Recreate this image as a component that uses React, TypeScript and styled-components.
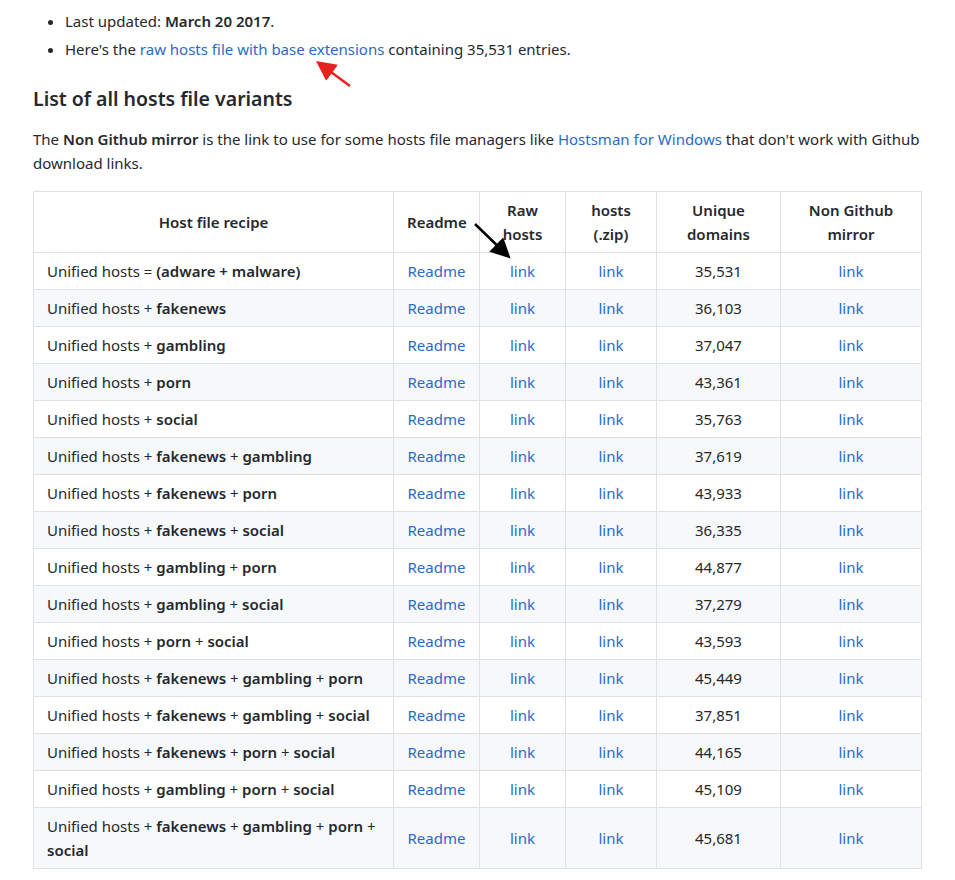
import React from "react";
import styled, { createGlobalStyle } from "styled-components";

const Global = createGlobalStyle`
  body { margin: 0; background: #fff; font-family: "Noto Sans", "Open Sans", sans-serif; color: #24292e; font-size: 15px; line-height: 24px; }
`;
const Page = styled.div` position: relative; padding: 9px 35px 0 33px; width: 887px; `;
const List = styled.ul` margin: 0; padding-left: 32px; li { margin-bottom: 4px; } `;
const A = styled.a` color: #2a6ac8; text-decoration: none; `;
const H2 = styled.h2` font-size: 19.5px; font-weight: 600; margin: 24px 0 14px; line-height: 28px; `;
const P = styled.p` margin: 0 0 16px; `;
const Table = styled.table` border-collapse: collapse; width: 888px; table-layout: fixed; `;
const Th = styled.th` border: 1px solid #dfe2e5; padding: 6px 13px; font-weight: 600; text-align: center; height: 47px; `;
const Tr = styled.tr<{ $alt: boolean }>` background: ${p => (p.$alt ? "#f6f8fa" : "#fff")}; `;
const Td = styled.td<{ $left?: boolean }>` border: 1px solid #dfe2e5; padding: 6px 13px; text-align: ${p => (p.$left ? "left" : "center")}; `;
const B = styled.b` font-weight: 600; `;
const Arrow = styled.svg` position: absolute; overflow: visible; left: 0; top: 0; pointer-events: none; `;

const rows: [string[], string][] = [
  [["= (adware + malware)"], "35,531"],
  [["fakenews"], "36,103"], [["gambling"], "37,047"], [["porn"], "43,361"], [["social"], "35,763"],
  [["fakenews", "gambling"], "37,619"], [["fakenews", "porn"], "43,933"], [["fakenews", "social"], "36,335"],
  [["gambling", "porn"], "44,877"], [["gambling", "social"], "37,279"], [["porn", "social"], "43,593"],
  [["fakenews", "gambling", "porn"], "45,449"], [["fakenews", "gambling", "social"], "37,851"],
  [["fakenews", "porn", "social"], "44,165"], [["gambling", "porn", "social"], "45,109"],
  [["fakenews", "gambling", "porn", "social"], "45,681"],
];

function Recipe({ parts }: { parts: string[] }) {
  if (parts[0].startsWith("=")) return <>Unified hosts = <B>(adware + malware)</B></>;
  return <>Unified hosts{parts.map((p, i) => <React.Fragment key={i}> + <B>{p}</B></React.Fragment>)}</>;
}

export default function App() {
  return (
    <Page>
      <Global />
      <List>
        <li>Last updated: <B>March 20 2017</B>.</li>
        <li>Here's the <A href="#">raw hosts file with base extensions</A> containing 35,531 entries.</li>
      </List>
      <H2>List of all hosts file variants</H2>
      <P>The <B>Non Github mirror</B> is the link to use for some hosts file managers like <A href="#">Hostsman for Windows</A> that don't work with Github download links.</P>
      <Table>
        <colgroup>
          <col style={{ width: 360 }} /><col style={{ width: 86 }} /><col style={{ width: 86 }} />
          <col style={{ width: 91 }} /><col style={{ width: 124 }} /><col style={{ width: 141 }} />
        </colgroup>
        <thead>
          <tr>
            <Th>Host file recipe</Th><Th>Readme</Th><Th>Raw hosts</Th><Th>hosts (.zip)</Th><Th>Unique domains</Th><Th>Non Github mirror</Th>
          </tr>
        </thead>
        <tbody>
          {rows.map(([parts, n], i) => (
            <Tr key={i} $alt={i % 2 === 1}>
              <Td $left><Recipe parts={parts} /></Td>
              <Td><A href="#">Readme</A></Td>
              <Td><A href="#">link</A></Td>
              <Td><A href="#">link</A></Td>
              <Td>{n}</Td>
              <Td><A href="#">link</A></Td>
            </Tr>
          ))}
        </tbody>
      </Table>
      <Arrow width="955" height="880">
        <defs>
          <marker id="r" markerWidth="8" markerHeight="8" refX="6" refY="4" orient="auto"><path d="M0,0 L8,4 L0,8 z" fill="#e8231f" /></marker>
          <marker id="k" markerWidth="8" markerHeight="8" refX="6" refY="4" orient="auto"><path d="M0,0 L8,4 L0,8 z" fill="#000" /></marker>
        </defs>
        <line x1="350" y1="86" x2="320" y2="64" stroke="#e8231f" strokeWidth="2.5" markerEnd="url(#r)" />
        <line x1="475" y1="224" x2="507" y2="255" stroke="#000" strokeWidth="2.5" markerEnd="url(#k)" />
      </Arrow>
    </Page>
  );
}
